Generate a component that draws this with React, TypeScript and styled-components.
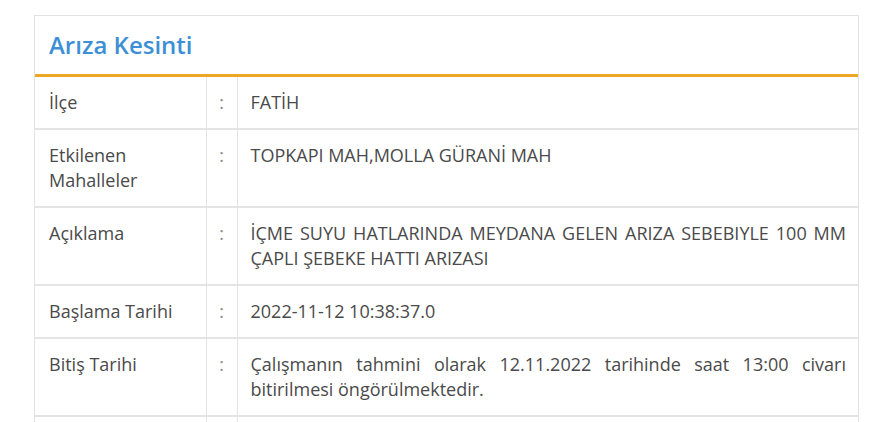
import styled, {createGlobalStyle} from "styled-components";

const GlobalStyle = createGlobalStyle`
  body {
    margin: 0;
    background: #ffffff;
    font-family: "Open Sans", "Liberation Sans", sans-serif;
  }
`

const Page = styled.div`
  height: 100vh;
  overflow: hidden;
  padding: 15px 21px 0 34px;
  box-sizing: border-box;
`

const Card = styled.div`
  width: 825px;
  border: 1px solid #e2e2e2;
  border-bottom: none;
  box-sizing: border-box;
  background: #ffffff;
`

const CardHeader = styled.div`
  padding: 14px 14px 0;
  height: 61px;
  box-sizing: border-box;
  border-bottom: 3px solid #eea725;
`

const Title = styled.h2`
  margin: 0;
  font-size: 24px;
  line-height: 30px;
  font-weight: 600;
  color: #3c8fd6;
`

const InfoTable = styled.table`
  width: 100%;
  border-collapse: collapse;
  table-layout: fixed;
`

const Row = styled.tr`
  border-bottom: 2px solid #e4e4e4;
`

const Cell = styled.td<{ $width?: number; $align?: string }>`
  width: ${p => (p.$width ? `${p.$width}px` : "auto")};
  padding: 13px 12px 13px 14px;
  vertical-align: top;
  font-size: 18px;
  line-height: 25px;
  color: #4a4a4a;
  text-align: ${p => p.$align || "left"};
  border-right: 1px solid #e4e4e4;
  box-sizing: border-box;

  &:last-child {
    border-right: none;
  }
`

const ColonCell = styled(Cell)`
  padding-left: 0;
  padding-right: 0;
  color: #8a8a8a;
`

const ValueCell = styled(Cell)`
  padding-left: 13px;
  text-align: justify;
`

const rows: Array<{ label: string; value: string }> = [
    {label: "İlçe", value: "FATİH"},
    {label: "Etkilenen Mahalleler", value: "TOPKAPI MAH,MOLLA GÜRANİ MAH"},
    {label: "Açıklama", value: "İÇME SUYU HATLARINDA MEYDANA GELEN ARIZA SEBEBIYLE 100 MM ÇAPLI ŞEBEKE HATTI ARIZASI"},
    {label: "Başlama Tarihi", value: "2022-11-12 10:38:37.0"},
    {label: "Bitiş Tarihi", value: "Çalışmanın tahmini olarak 12.11.2022 tarihinde saat 13:00 civarı bitirilmesi öngörülmektedir."},
];

function App() {
    return (
        <>
            <GlobalStyle/>
            <Page>
                <Card>
                    <CardHeader>
                        <Title>Arıza Kesinti</Title>
                    </CardHeader>
                    <InfoTable>
                        <tbody>
                        {rows.map(row => (
                            <Row key={row.label}>
                                <Cell $width={171}>{row.label}</Cell>
                                <ColonCell $width={31} $align="center">:</ColonCell>
                                <ValueCell>{row.value}</ValueCell>
                            </Row>
                        ))}
                        <Row>
                            <Cell $width={171}>&nbsp;</Cell>
                            <ColonCell $width={31} $align="center">&nbsp;</ColonCell>
                            <ValueCell>&nbsp;</ValueCell>
                        </Row>
                        </tbody>
                    </InfoTable>
                </Card>
            </Page>
        </>
    );
}

export default App;
